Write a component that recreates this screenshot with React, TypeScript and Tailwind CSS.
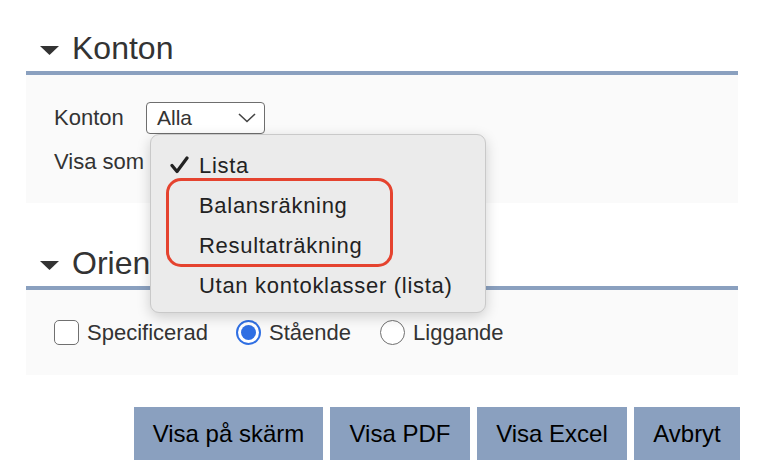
const font = { fontFamily: '"Liberation Sans", Arial, sans-serif' };

function SectionHeader({ title }: { title: string }) {
  return (
    <div className="h-[71px] flex items-end pb-[3px]">
      <div className="flex items-center">
        <svg width="19" height="9" viewBox="0 0 19 9" className="ml-[14px] mr-[13px] mt-[4px]">
          <polygon points="0,0 19,0 9.5,9" fill="#333" />
        </svg>
        <span className="text-[32px] leading-[40px] text-[#333]">{title}</span>
      </div>
    </div>
  );
}

function Radio({ checked }: { checked?: boolean }) {
  if (checked) {
    return (
      <span className="w-[25px] h-[25px] rounded-full bg-[#2f6fe3] flex items-center justify-center">
        <span className="w-[21px] h-[21px] rounded-full bg-white flex items-center justify-center">
          <span className="w-[15px] h-[15px] rounded-full bg-[#2f6fe3]" />
        </span>
      </span>
    );
  }
  return <span className="block w-[25px] h-[25px] rounded-full border-[1.5px] border-[#707070] bg-white" />;
}

export default function App() {
  return (
    <div className="relative w-[782px] h-[476px] bg-white overflow-hidden text-[#333]" style={font}>
      <div className="pl-[26px] pr-[44px]">
        <SectionHeader title="Konton" />
        <div className="h-[4px] bg-[#8aa0bf]" />
        <div className="h-[128px] bg-[#fafafa] pl-[28px] pt-[26px]">
          <div className="flex items-center">
            <span className="text-[22px] w-[92px]">Konton</span>
            <div className="w-[119px] h-[32px] rounded-[4px] border-[1.5px] border-[#6e6e6e] bg-white flex items-center justify-between pl-[10px] pr-[8px]">
              <span className="text-[21px]">Alla</span>
              <svg width="18" height="10" viewBox="0 0 18 10">
                <polyline points="1,1 9,8.5 17,1" fill="none" stroke="#444" strokeWidth="1.6" />
              </svg>
            </div>
          </div>
          <div className="mt-[11px] text-[22px]">Visa som</div>
        </div>

        <div className="h-[12px]" />
        <SectionHeader title="Orientering" />
        <div className="h-[4px] bg-[#8aa0bf]" />
        <div className="h-[85px] bg-[#fafafa] pl-[28px] flex items-center">
          <span className="w-[25px] h-[25px] rounded-[5px] border-[1.5px] border-[#707070] bg-white" />
          <span className="text-[22px] ml-[8px]">Specificerad</span>
          <span className="ml-[28px] flex"><Radio checked /></span>
          <span className="text-[22px] ml-[8px]">Stående</span>
          <span className="ml-[29px] flex"><Radio /></span>
          <span className="text-[22px] ml-[8px]">Liggande</span>
        </div>

        <div className="mt-[32px] flex justify-end gap-[7px] -mr-[2px]">
          {[
            ['Visa på skärm', 'w-[189px]'],
            ['Visa PDF', 'w-[140px]'],
            ['Visa Excel', 'w-[150px]'],
            ['Avbryt', 'w-[106px]'],
          ].map(([label, w]) => (
            <button key={label} className={`${w} h-[53px] bg-[#8aa0bf] text-black text-[24px]`}>
              {label}
            </button>
          ))}
        </div>
      </div>

      <div className="absolute left-[150px] top-[134px] w-[336px] h-[179px] rounded-[9px] bg-[#ebebeb] border border-[#c9c9c9] shadow-[0_4px_14px_rgba(0,0,0,0.18)] pt-[10px]">
        {['Lista', 'Balansräkning', 'Resultaträkning', 'Utan kontoklasser (lista)'].map((item, i) => (
          <div key={item} className="h-[40px] flex items-center text-[22px] text-[#222] tracking-[0.7px]">
            <span className="w-[48px] flex justify-end pr-[10px]">
              {i === 0 && (
                <svg width="19" height="18" viewBox="0 0 19 18">
                  <polyline points="2,9.5 7,15.5 17,2" fill="none" stroke="#222" strokeWidth="3.2" strokeLinecap="round" strokeLinejoin="round" />
                </svg>
              )}
            </span>
            <span>{item}</span>
          </div>
        ))}
      </div>
      <div className="absolute left-[166px] top-[178px] w-[227px] h-[89px] rounded-[15px] border-[3px] border-[#e5432f]" />
    </div>
  );
}
